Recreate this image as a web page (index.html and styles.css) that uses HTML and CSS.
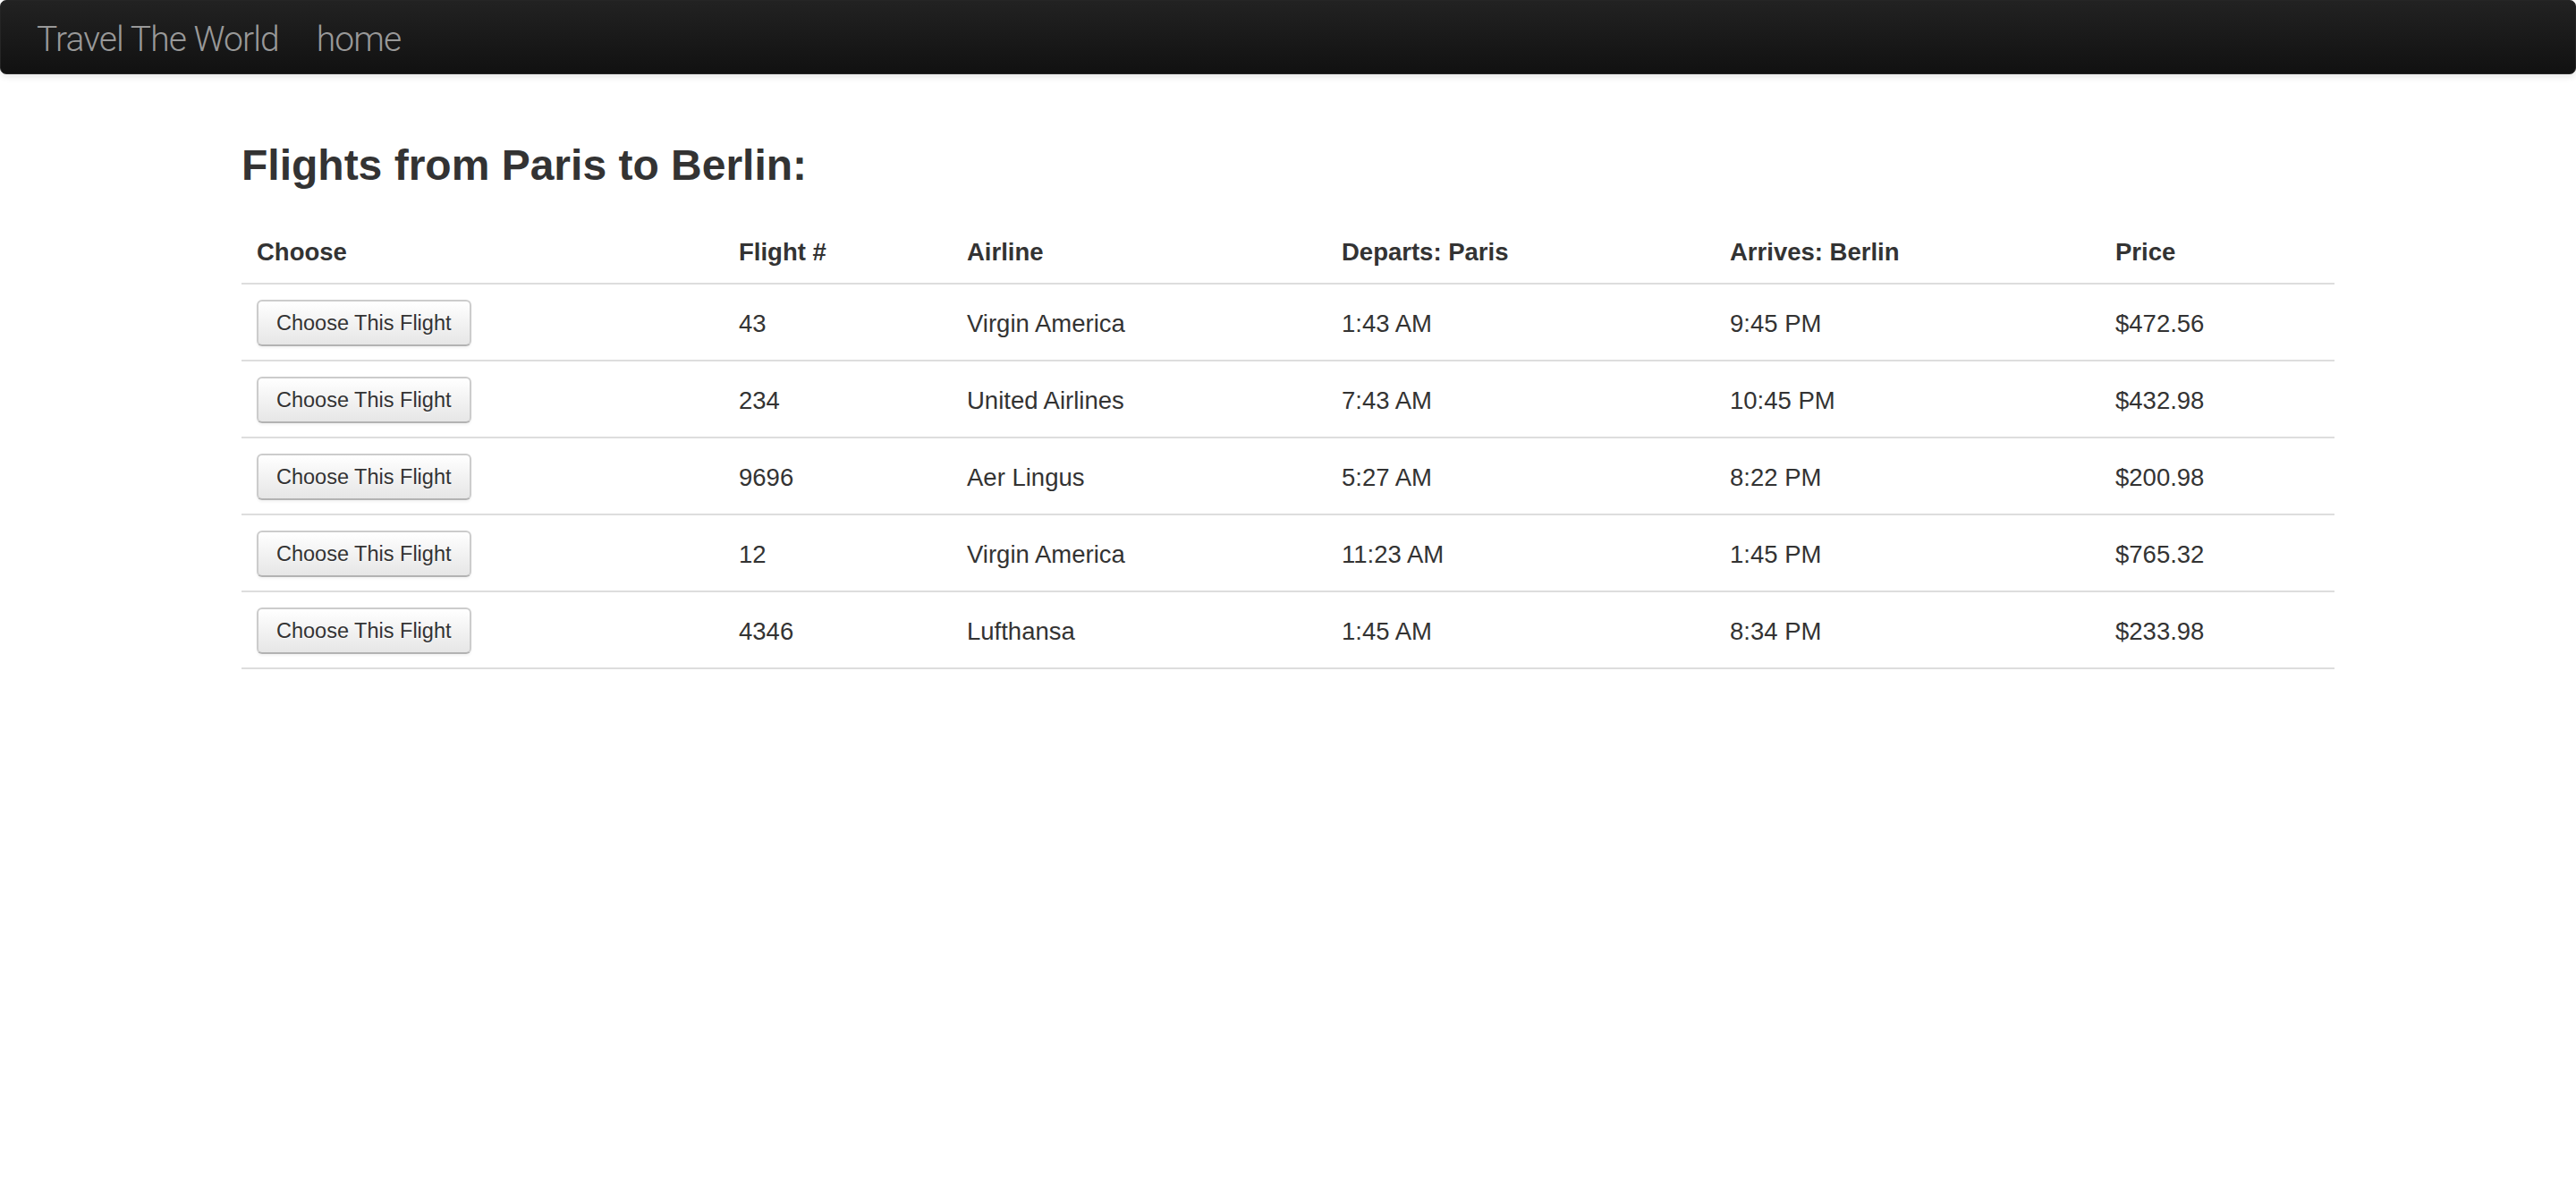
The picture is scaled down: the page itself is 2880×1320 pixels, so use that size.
FILE: index.html
```html
<!DOCTYPE html>
<html>
<head>
<meta charset="utf-8">
<title>Travel The World</title>
<link rel="stylesheet" href="styles.css">
</head>
<body>
<div class="navbar">
  <a class="brand" href="#">Travel The World</a>
  <a class="brand nav-home" href="#">home</a>
</div>
<div class="container">
  <h2 class="title">Flights from Paris to Berlin:</h2>
  <table class="flights">
    <colgroup>
      <col class="c-choose"><col class="c-flight"><col class="c-airline"><col class="c-dep"><col class="c-arr"><col class="c-price">
    </colgroup>
    <thead>
      <tr><th>Choose</th><th>Flight #</th><th>Airline</th><th>Departs: Paris</th><th>Arrives: Berlin</th><th>Price</th></tr>
    </thead>
    <tbody>
      <tr><td><button class="btn">Choose This Flight</button></td><td>43</td><td>Virgin America</td><td>1:43 AM</td><td>9:45 PM</td><td>$472.56</td></tr>
      <tr><td><button class="btn">Choose This Flight</button></td><td>234</td><td>United Airlines</td><td>7:43 AM</td><td>10:45 PM</td><td>$432.98</td></tr>
      <tr><td><button class="btn">Choose This Flight</button></td><td>9696</td><td>Aer Lingus</td><td>5:27 AM</td><td>8:22 PM</td><td>$200.98</td></tr>
      <tr><td><button class="btn">Choose This Flight</button></td><td>12</td><td>Virgin America</td><td>11:23 AM</td><td>1:45 PM</td><td>$765.32</td></tr>
      <tr><td><button class="btn">Choose This Flight</button></td><td>4346</td><td>Lufthansa</td><td>1:45 AM</td><td>8:34 PM</td><td>$233.98</td></tr>
    </tbody>
  </table>
</div>
</body>
</html>
```
FILE: styles.css
```css
html, body {
  margin: 0;
  padding: 0;
  background: #fff;
}
body {
  font-family: "Liberation Sans", Arial, sans-serif;
  color: #333;
}
.navbar {
  box-sizing: border-box;
  height: 83px;
  display: flex;
  align-items: center;
  padding: 5px 0 0 40px;
  background: linear-gradient(to bottom, #222222, #111111);
  border: 1px solid #252525;
  border-radius: 7px;
  box-shadow: 0 2px 8px rgba(0, 0, 0, 0.12);
}
.brand {
  font-family: Roboto, "Liberation Sans", sans-serif;
  font-weight: 300;
  font-size: 39px;
  line-height: 48px;
  color: #999999;
  text-decoration: none;
  letter-spacing: -0.9px;
}
.nav-home {
  margin-left: 42px;
}
.container {
  width: 2340px;
  margin: 0 auto;
}
.title {
  font-family: "Liberation Sans", Arial, sans-serif;
  font-weight: bold;
  font-size: 48px;
  line-height: 72px;
  margin: 66px 0 26px 0;
  color: #333;
}
.flights {
  width: 2340px;
  table-layout: fixed;
  border-collapse: separate;
  border-spacing: 0;
  border-bottom: 2px solid #dddddd;
  font-size: 27.5px;
  line-height: 37px;
}
.c-choose { width: 539px; }
.c-flight { width: 255px; }
.c-airline { width: 419px; }
.c-dep { width: 434px; }
.c-arr { width: 431px; }
.c-price { width: 262px; }
.flights th {
  text-align: left;
  font-weight: bold;
  padding: 16px 16px 16px 17px;
  vertical-align: bottom;
}
.flights td {
  padding: 17px 16px 15px 17px;
  border-top: 2px solid #dddddd;
  vertical-align: middle;
  height: 52px;
}
.btn {
  box-sizing: border-box;
  height: 52px;
  padding: 0 20px;
  font-family: "Liberation Sans", Arial, sans-serif;
  font-size: 23.5px;
  color: #333;
  text-shadow: 0 1px 1px rgba(255, 255, 255, 0.75);
  background: linear-gradient(to bottom, #ffffff, #e6e6e6);
  border: 2px solid #cccccc;
  border-bottom-color: #b3b3b3;
  border-radius: 6px;
  box-shadow: inset 0 2px 0 rgba(255, 255, 255, 0.2), 0 2px 3px rgba(0, 0, 0, 0.05);
  display: block;
}
```
